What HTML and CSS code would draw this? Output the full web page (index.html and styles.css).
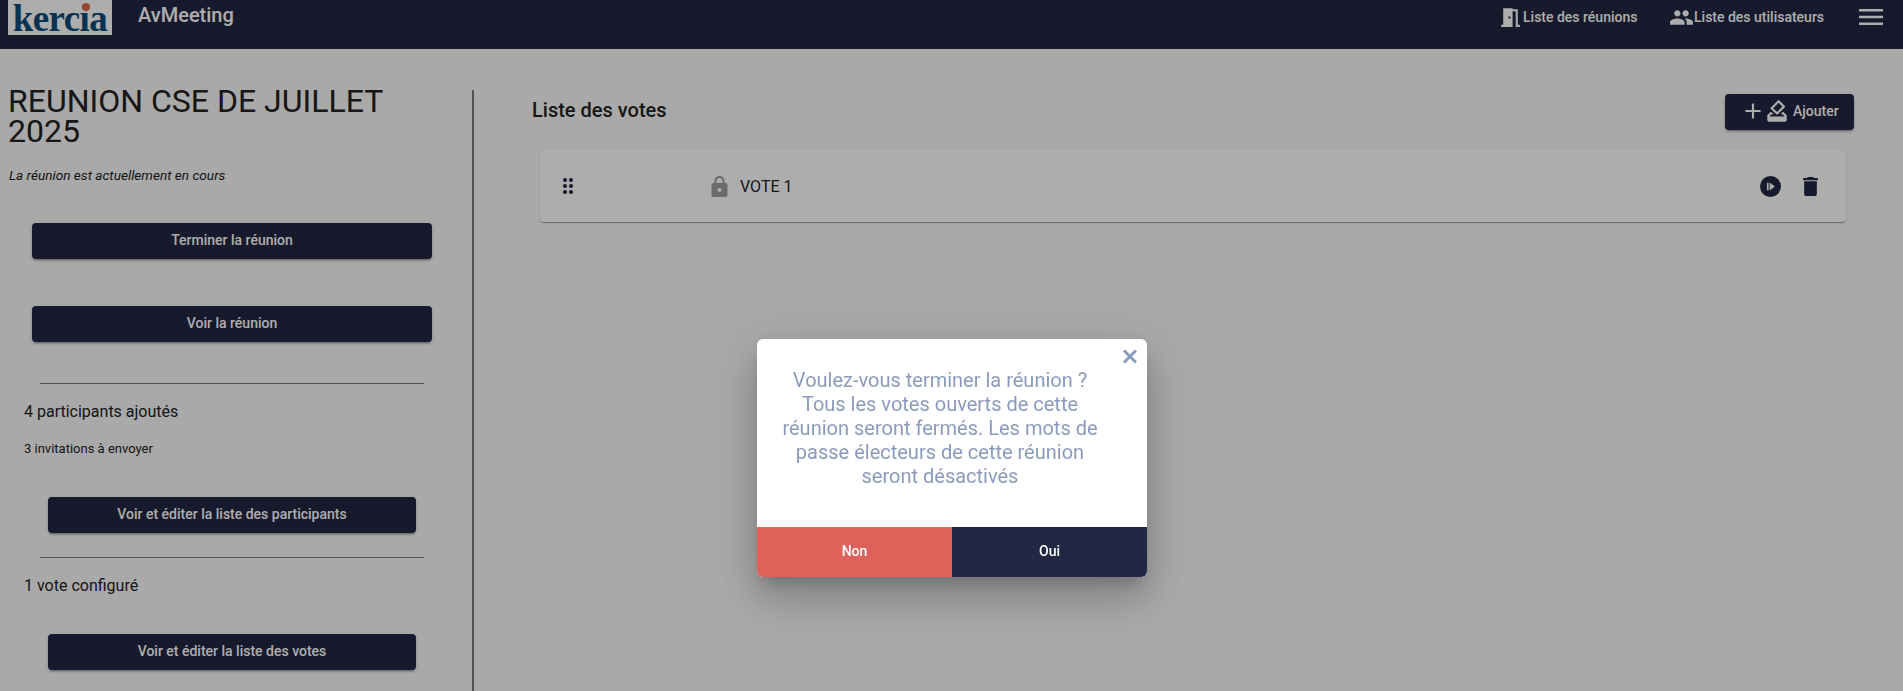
FILE: index.html
```html
<!DOCTYPE html>
<html lang="fr">
<head>
<meta charset="utf-8">
<title>AvMeeting</title>
<link rel="stylesheet" href="styles.css">
</head>
<body>
<header class="topbar">
  <div class="logo"><span class="logo-text">kercia</span><span class="logo-dot"></span></div>
  <div class="app-name">AvMeeting</div>
  <nav class="nav">
    <a class="nav-link nav-rooms"><svg class="nav-icon" viewBox="0 0 24 24"><path d="M14 6v15H3v-2h2V3h9v1h5v15h2v2h-4V6h-3zm-4 5v2h2v-2h-2z"/></svg>Liste des réunions</a>
    <a class="nav-link nav-users"><svg class="nav-icon users-icon" viewBox="0 0 24 24"><path d="M16 11c1.66 0 2.99-1.34 2.99-3S17.66 5 16 5c-1.66 0-3 1.34-3 3s1.34 3 3 3zm-8 0c1.66 0 2.99-1.34 2.99-3S9.66 5 8 5C6.34 5 5 6.34 5 8s1.34 3 3 3zm0 2c-2.33 0-7 1.17-7 3.5V19h14v-2.5c0-2.33-4.67-3.5-7-3.5zm8 0c-.29 0-.62.02-.97.05 1.16.84 1.97 1.97 1.97 3.45V19h6v-2.5c0-2.33-4.67-3.5-7-3.5z"/></svg>Liste des utilisateurs</a>
  </nav>
  <svg class="menu-icon" viewBox="0 0 24 16"><path d="M0 0h24v2.6H0zM0 6.7h24v2.6H0zM0 13.4h24V16H0z"/></svg>
</header>
<main class="layout">
  <aside class="sidebar">
    <h1 class="meeting-title">REUNION CSE DE JUILLET 2025</h1>
    <p class="status">La réunion est actuellement en cours</p>
    <div class="actions">
      <button class="btn">Terminer la réunion</button>
      <button class="btn">Voir la réunion</button>
    </div>
    <hr class="rule rule-first">
    <p class="count">4 participants ajoutés</p>
    <p class="sub">3 invitations à envoyer</p>
    <button class="btn btn-narrow">Voir et éditer la liste des participants</button>
    <hr class="rule">
    <p class="count">1 vote configuré</p>
    <button class="btn btn-narrow btn-last">Voir et éditer la liste des votes</button>
  </aside>
  <section class="content">
    <div class="content-head">
      <h2 class="content-title">Liste des votes</h2>
      <button class="btn btn-add">
        <svg class="add-plus" viewBox="0 0 24 24"><path d="M19 13h-6v6h-2v-6H5v-2h6V5h2v6h6v2z"/></svg>
        <svg class="add-vote" viewBox="0 0 24 24"><path d="M18 13h-.68l-2 2h1.91L19 17H5l1.78-2h2.05l-2-2H6l-3 3v4c0 1.1.89 2 1.99 2H19c1.1 0 2-.89 2-2v-4l-3-3zm-1-5.05l-4.95 4.95-3.54-3.54 4.95-4.95L17 7.95zm-4.24-5.66L6.39 8.66c-.39.39-.39 1.02 0 1.41l4.95 4.95c.39.39 1.02.39 1.41 0l6.36-6.36c.39-.39.39-1.02 0-1.41L14.16 2.3c-.38-.4-1.01-.4-1.4-.01z"/></svg>
        Ajouter
      </button>
    </div>
    <div class="vote-card">
      <svg class="drag" viewBox="0 0 10 16"><circle cx="2" cy="2" r="2"/><circle cx="8" cy="2" r="2"/><circle cx="2" cy="8" r="2"/><circle cx="8" cy="8" r="2"/><circle cx="2" cy="14" r="2"/><circle cx="8" cy="14" r="2"/></svg>
      <svg class="lock" viewBox="4 1 16 21"><path d="M18 8h-1V6c0-2.76-2.24-5-5-5S7 3.24 7 6v2H6c-1.1 0-2 .9-2 2v10c0 1.1.9 2 2 2h12c1.1 0 2-.9 2-2V10c0-1.1-.9-2-2-2zm-6 9c-1.1 0-2-.9-2-2s.9-2 2-2 2 .9 2 2-.9 2-2 2zm3.1-9H8.9V6c0-1.71 1.39-3.1 3.1-3.1 1.71 0 3.1 1.39 3.1 3.1v2z"/></svg>
      <span class="vote-name">VOTE 1</span>
      <svg class="play" viewBox="0 0 20 20"><circle cx="10" cy="10" r="10"/><path class="play-mark" d="M6.6 6.4h1.6v7.2H6.6zM9.2 6.2l5 3.8-5 3.8z"/></svg>
      <svg class="trash" viewBox="5 3 14 18"><path d="M6 19c0 1.1.9 2 2 2h8c1.1 0 2-.9 2-2V7H6v12zM19 4h-3.5l-1-1h-5l-1 1H5v2h14V4z"/></svg>
    </div>
  </section>
</main>
<div class="backdrop"></div>
<div class="modal">
  <svg class="close" viewBox="0 0 16 15"><path d="M2 1.500L14 13.500M14 1.500L2 13.500"/></svg>
  <p class="modal-text">Voulez-vous terminer la réunion ? Tous les votes ouverts de cette réunion seront fermés. Les mots de passe électeurs de cette réunion seront désactivés</p>
  <div class="modal-actions">
    <button class="modal-btn modal-no">Non</button>
    <button class="modal-btn modal-yes">Oui</button>
  </div>
</div>
</body>
</html>
```
FILE: styles.css
```css
* { box-sizing: border-box; }
html, body { height: 100%; }
body {
  margin: 0;
  overflow: hidden;
  background: #fafafa;
  color: #222;
  font-family: Roboto, "Liberation Sans", sans-serif;
}
button { font-family: inherit; border: 0; }

.topbar {
  height: 49px;
  background: #222743;
  color: #fff;
  display: flex;
  align-items: flex-start;
  padding-left: 8px;
}
.logo {
  position: relative;
  width: 104px;
  height: 35px;
  background: #fff;
  overflow: hidden;
  text-align: center;
}
.logo-text {
  display: block;
  font-family: "Liberation Serif", serif;
  font-weight: 700;
  font-size: 37px;
  line-height: 38px;
  letter-spacing: -0.6px;
  color: #0d4a78;
}
.logo-dot {
  position: absolute;
  left: 74px;
  top: 3px;
  width: 8px;
  height: 8px;
  border-radius: 50%;
  background: #e2664f;
}
.app-name {
  margin: 4px 0 0 26px;
  font-size: 20px;
  line-height: 23px;
  font-weight: 500;
}
.nav {
  margin-left: auto;
  display: flex;
  margin-top: 7px;
}
.nav-link {
  display: flex;
  align-items: center;
  height: 20px;
  font-size: 14px;
  font-weight: 500;
  color: #fff;
  white-space: nowrap;
}
.nav-rooms { width: 168px; }
.nav-users { width: 154px; }
.nav-icon { width: 25px; height: 25px; fill: #fff; flex: none; margin-left: -4px; }
.users-icon { margin-left: -1px; }
.menu-icon { width: 24px; height: 16px; margin: 9px 20px 0 35px; fill: #fff; }

.layout { display: flex; height: 642px; }
.sidebar {
  width: 474px;
  flex: none;
  height: 601px;
  margin-top: 41px;
  border-right: 2px solid #7d7d7d;
  padding-right: 40px;
}
.meeting-title {
  margin: -4px 0 0 8px;
  font-size: 32px;
  line-height: 30px;
  font-weight: 400;
  color: #222;
}
.status {
  margin: 21px 0 0 9px;
  font-size: 13.6px;
  line-height: 16px;
  font-style: italic;
  font-weight: 400;
  color: #1a1a1a;
}
.actions {
  display: flex;
  flex-direction: column;
  gap: 47px;
  margin: 40px 0 0 32px;
  width: 400px;
}
.btn {
  display: block;
  height: 36px;
  background: #222743;
  color: #fff;
  border-radius: 4px;
  font-size: 14px;
  font-weight: 500;
  padding: 0 0 2px;
  box-shadow: 0 3px 1px -2px rgba(0,0,0,.2), 0 2px 2px 0 rgba(0,0,0,.14), 0 1px 5px 0 rgba(0,0,0,.12);
}
.actions .btn { width: 400px; }
.btn-narrow { width: 368px; margin: 0 0 0 48px; }
.rule {
  margin: 0 0 0 40px;
  width: 384px;
  height: 1px;
  border: 0;
  background: #7d7d7d;
}
.rule-first { margin-top: 41px; }
.count {
  margin: 18px 0 0 24px;
  font-size: 16px;
  line-height: 20px;
  color: #222;
}
.sub {
  margin: 17px 0 0 24px;
  font-size: 13px;
  line-height: 20px;
}
.sub + .btn { margin-top: 38px; margin-bottom: 24px; }
.count + .btn-last { margin-top: 38px; }

.content { flex: 1; padding: 45px 49px 0 58px; min-width: 0; }
.content-head {
  display: flex;
  justify-content: space-between;
  align-items: flex-start;
  height: 56px;
}
.content-title {
  margin: 0;
  font-size: 20px;
  line-height: 32px;
  font-weight: 500;
}
.btn-add {
  width: 129px;
  display: flex;
  align-items: center;
  padding: 0 0 2px 15px;
}
.add-plus { width: 26px; height: 26px; fill: #fff; flex: none; margin-right: -2px; }
.add-vote { width: 26px; height: 26px; fill: #fff; flex: none; margin-right: 3px; }
.vote-card {
  margin: 0 8px;
  height: 72px;
  background: #fff;
  border-radius: 4px;
  box-shadow: 0 2px 1px -1px rgba(0,0,0,.2), 0 1px 1px 0 rgba(0,0,0,.14), 0 1px 3px 0 rgba(0,0,0,.12);
  display: flex;
  align-items: center;
  padding-left: 23px;
  color: #222;
}
.drag { width: 10px; height: 16px; fill: #222743; flex: none; }
.lock { width: 17px; height: 21px; fill: #9e9e9e; flex: none; margin-left: 138px; }
.vote-name { margin-left: 12px; font-size: 16px; }
.play { width: 21px; height: 21px; fill: #222743; margin-left: auto; flex: none; }
.play-mark { fill: #fff; }
.trash { width: 15px; height: 19px; fill: #222743; margin: 0 28px 0 22px; flex: none; }

.backdrop { position: fixed; inset: 0; background: rgba(0,0,0,.32); }
.modal {
  position: fixed;
  left: 757px;
  top: 339px;
  width: 390px;
  height: 238px;
  background: #fff;
  border-radius: 6px;
  overflow: hidden;
  box-shadow: 0 11px 15px -7px rgba(0,0,0,.2), 0 24px 38px 3px rgba(0,0,0,.14), 0 9px 46px 8px rgba(0,0,0,.12);
  display: flex;
  flex-direction: column;
}
.close {
  position: absolute;
  right: 9px;
  top: 10px;
  width: 16px;
  height: 15px;
  fill: none;
  stroke: #8a9bbb;
  stroke-width: 3px;
}
.modal-text {
  margin: 29px 0 0 24px;
  width: 318px;
  height: 159px;
  text-align: center;
  color: #8a9bbb;
  font-size: 20px;
  line-height: 24px;
  flex: none;
}
.modal-actions { display: flex; height: 50px; }
.modal-btn {
  flex: 1;
  color: #fff;
  font-size: 14px;
  font-weight: 500;
  padding: 0 0 2px;
}
.modal-no { background: #dd625a; }
.modal-yes { background: #222743; }
```
